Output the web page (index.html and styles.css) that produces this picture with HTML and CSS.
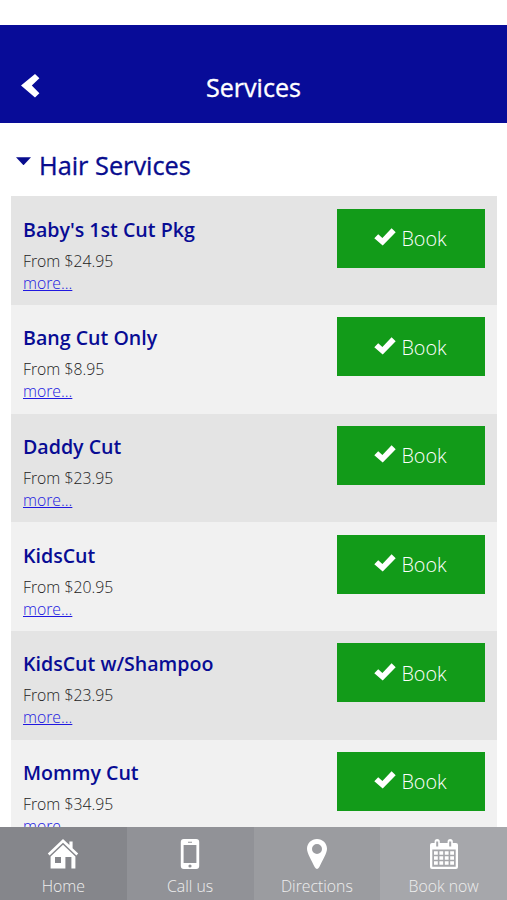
FILE: index.html
```html
<!DOCTYPE html>
<html lang="en">
<head>
<meta charset="utf-8">
<title>Services</title>
<link rel="stylesheet" href="styles.css">
</head>
<body>
<svg class="defs" aria-hidden="true">
  <symbol id="check" viewBox="0 0 22 18"><path d="M.3 10.2 4.2 6.2 8.4 10 17.6.3 21.7 4.2 8.7 17.6Z"/></symbol>
</svg>
<div class="screen">
  <header class="bar">
    <svg class="back" viewBox="0 0 20 26"><path d="M15 1 19.4 5.2 11.8 12.6 19.4 20.2 15 24.6 1 12.6Z"/></svg>
    <h1 class="title">Services</h1>
  </header>
  <main class="content">
    <h2 class="section"><span class="caret"></span><span>Hair Services</span></h2>
    <ul class="list">
      <li class="row"><div class="info"><h3 class="name">Baby's 1st Cut Pkg</h3><p class="price">From $24.95</p><a class="more" href="#">more...</a></div><button class="book"><svg class="check"><use href="#check"/></svg><span>Book</span></button></li>
      <li class="row"><div class="info"><h3 class="name">Bang Cut Only</h3><p class="price">From $8.95</p><a class="more" href="#">more...</a></div><button class="book"><svg class="check"><use href="#check"/></svg><span>Book</span></button></li>
      <li class="row"><div class="info"><h3 class="name">Daddy Cut</h3><p class="price">From $23.95</p><a class="more" href="#">more...</a></div><button class="book"><svg class="check"><use href="#check"/></svg><span>Book</span></button></li>
      <li class="row"><div class="info"><h3 class="name">KidsCut</h3><p class="price">From $20.95</p><a class="more" href="#">more...</a></div><button class="book"><svg class="check"><use href="#check"/></svg><span>Book</span></button></li>
      <li class="row"><div class="info"><h3 class="name">KidsCut w/Shampoo</h3><p class="price">From $23.95</p><a class="more" href="#">more...</a></div><button class="book"><svg class="check"><use href="#check"/></svg><span>Book</span></button></li>
      <li class="row"><div class="info"><h3 class="name">Mommy Cut</h3><p class="price">From $34.95</p><a class="more" href="#">more...</a></div><button class="book"><svg class="check"><use href="#check"/></svg><span>Book</span></button></li>
    </ul>
  </main>
  <nav class="tabs">
    <a class="tab"><svg class="icon" viewBox="0 0 32 32"><path d="M16 1 .8 15.6 2.6 17.5 16 4.8 29.4 17.5 31.2 15.6 25.6 10.2V3.6H22.4V7.1Z"/><path fill-rule="evenodd" d="M16 6.8 3.6 18.6V30.5H18.4V19H24.4V30.5H28.4V18.6ZM8 19H14V25H8Z"/></svg><span>Home</span></a>
    <a class="tab"><svg class="icon" viewBox="0 0 32 32"><path fill-rule="evenodd" d="M9.8 1H22.2Q25.2 1 25.2 4V28Q25.2 31 22.2 31H9.8Q6.8 31 6.8 28V4Q6.8 1 9.8 1ZM9.6 7V25H22.4V7ZM14 3.7V4.7H18V3.7ZM16 26.4A1.6 1.6 0 1 0 16 29.6 1.6 1.6 0 1 0 16 26.4Z"/></svg><span>Call us</span></a>
    <a class="tab"><svg class="icon" viewBox="0 0 32 32"><path fill-rule="evenodd" d="M16 1C10.4 1 6 5.3 6 10.7 6 15.2 10.5 22.3 13.8 29.2Q16 32.8 18.2 29.2C21.5 22.3 26 15.2 26 10.7 26 5.3 21.6 1 16 1ZM16 6A5 5 0 1 1 16 16 5 5 0 1 1 16 6Z"/></svg><span>Directions</span></a>
    <a class="tab"><svg class="icon" viewBox="0 0 32 32"><path fill-rule="evenodd" d="M4 5H6.6V3.6Q6.6 1 9.2 1T11.8 3.6V5H19.6V3.6Q19.6 1 22.2 1T24.8 3.6V5H28Q30 5 30 7V29Q30 31 28 31H4Q2 31 2 29V7Q2 5 4 5ZM8.2 3.6V8.4H10.2V3.6ZM21.2 3.6V8.4H23.2V3.6ZM4.3 11.5V28.7H27.7V11.5Z"/><path d="M6 13.2h3.8v3.5H6zm5.4 0h3.8v3.5h-3.8zm5.4 0h3.8v3.5h-3.8zm5.4 0H26v3.5h-3.8zM6 18.2h3.8v3.5H6zm5.4 0h3.8v3.5h-3.8zm5.4 0h3.8v3.5h-3.8zm5.4 0H26v3.5h-3.8zM6 23.2h3.8v3.5H6zm5.4 0h3.8v3.5h-3.8zm5.4 0h3.8v3.5h-3.8zm5.4 0H26v3.5h-3.8z"/></svg><span>Book now</span></a>
  </nav>
</div>
</body>
</html>
```
FILE: styles.css
```css
* { box-sizing: border-box; }
body { margin: 0; background: #fff; font-family: "Open Sans", sans-serif; }
h1, h2, h3, p, ul { margin: 0; padding: 0; }
svg { fill: #fff; flex: none; }
.defs { display: none; }
.screen { height: 900px; padding-top: 25.4px; display: flex; flex-direction: column; overflow: hidden; }
.bar { flex: none; height: 97.6px; padding: 27px 20px 0; background: #080c98; color: #fff; display: grid; grid-template-columns: 60px 1fr 60px; align-items: center; }
.back { width: 20px; height: 26px; margin-top: -3px; }
.title { margin-top: -1px; font-size: 25.1px; line-height: 34px; font-weight: 400; text-align: center; -webkit-text-stroke: .35px currentColor; }
.content { flex: 1; min-height: 0; overflow: hidden; padding: 0 10.5px 0 11px; }
.section { height: 73.4px; padding: 10px 0 0 5px; display: flex; align-items: center; gap: 8px; color: #080c8e; font-size: 25.3px; line-height: 34px; font-weight: 400; -webkit-text-stroke: .35px currentColor; }
.caret { width: 15px; height: 8px; margin-top: -7px; background: #080c8e; clip-path: polygon(0 0, 100% 0, 50% 100%); }
.list { list-style: none; }
.row { height: 108.7px; padding: 12.3px 12px 0; display: flex; justify-content: space-between; align-items: flex-start; background: #f1f1f1; }
.row:nth-child(odd) { background: #e4e4e4; }
.name { margin-top: 7px; font-size: 19.6px; line-height: 28px; font-weight: 600; color: #080c94; }
.price { margin-top: 6px; font-size: 15.8px; line-height: 22px; font-weight: 300; color: #222; }
.more { display: block; font-size: 15.8px; line-height: 22px; font-weight: 300; color: #2018e0; }
.book { width: 148px; height: 59px; padding: 1.6px 0 0; border: 0; display: flex; align-items: center; justify-content: center; gap: 5px; background: #129b19; color: #fff; font: 300 19.8px/28px "Open Sans", sans-serif; }
.check { width: 22px; height: 18px; margin-top: -4px; }
.tabs { flex: none; height: 73.4px; display: grid; grid-template-columns: repeat(4, 1fr); }
.tab { padding-top: 11px; display: flex; flex-direction: column; align-items: center; color: #eee; background: #85868b; font-size: 15.8px; line-height: 22px; font-weight: 300; }
.tab:nth-child(2) { background: #919297; }
.tab:nth-child(3) { background: #9b9ca0; }
.tab:nth-child(4) { background: #a6a7ab; }
.icon { width: 32px; height: 32px; margin-bottom: 5px; }
```
